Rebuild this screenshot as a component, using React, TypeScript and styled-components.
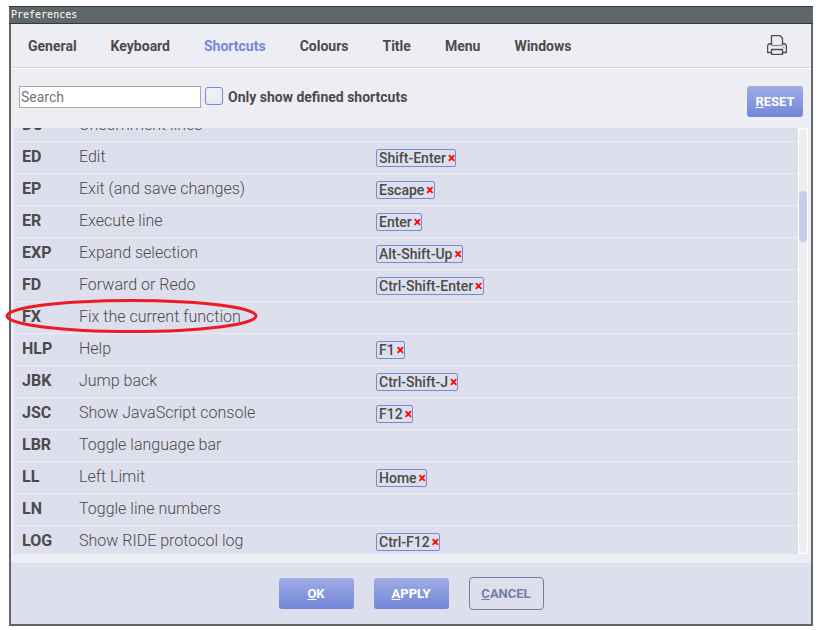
import React, { useLayoutEffect, useRef, useState } from "react";
import styled, { createGlobalStyle, css } from "styled-components";

const GlobalStyle = createGlobalStyle`
  * { box-sizing: border-box; }
  html, body, #root { height: 100%; }
  body {
    margin: 0;
    background: #fff;
    color: #4c4a4b;
    font: 400 14px/20px Roboto, "Liberation Sans", sans-serif;
  }
  button, input { font: inherit; color: inherit; }
`;

const Page = styled.div`
  position: relative;
  height: 100%;
  padding: 6px 13px 4px 9px;
`;

const Dialog = styled.main`
  height: 100%;
  display: flex;
  flex-direction: column;
  background: #edeef4;
  border: 2px solid #5f676a;
  border-top: 0;
`;

const TitleBar = styled.header`
  height: 18px;
  flex: none;
  margin: 0 -2px;
  padding-left: 2px;
  background: #5f676a;
  border-top: 1px solid #333a3c;
  border-bottom: 1px solid #333a3c;
  color: #fff;
  font: 10px/15px "DejaVu Sans Mono", monospace;
`;

const TabBar = styled.nav`
  height: 45px;
  flex: none;
  display: flex;
  align-items: center;
  padding-right: 24px;
  border-bottom: 1px solid #fff;
  box-shadow: inset 0 -1px #d3d4d6;
`;

const Tab = styled.button<{ $active: boolean }>`
  height: 44px;
  padding: 0 17px;
  border: 0;
  background: none;
  font-weight: 700;
  color: ${(p) => (p.$active ? "#7688d9" : "#4c4a4b")};
`;

const PrintButton = styled.button`
  display: flex;
  margin: 0 0 2px auto;
  padding: 0;
  border: 0;
  background: none;
`;

const Toolbar = styled.div`
  height: 59px;
  flex: none;
  display: flex;
  align-items: flex-start;
  padding: 17px 8px 0;
`;

const SearchBox = styled.input`
  width: 182px;
  height: 22px;
  padding: 0 1px;
  border: 1px solid #a9a9a9;
  background: #fff;
  &::placeholder { color: #757575; opacity: 1; }
`;

const CheckLabel = styled.label`
  display: flex;
  align-items: center;
  gap: 5px;
  height: 22px;
  margin-left: 4px;
  font-weight: 700;
`;

const CheckBox = styled.input`
  appearance: none;
  width: 18px;
  height: 18px;
  margin: 0 0 2px;
  border: 1px solid #7688d9;
  border-radius: 3px;
  background: linear-gradient(#f0f1f6, #e9e9ee);
  &:checked { background: #7688d9; }
`;

const Button = styled.button<{ $variant?: "outline" | "solid"; $wide?: boolean }>`
  height: 31px;
  width: ${(p) => (p.$wide ? "75px" : "56px")};
  padding: 0;
  border: 0;
  border-radius: 3px;
  background: linear-gradient(#a0ace5, #7286d8);
  color: #fff;
  font-size: 13px;
  font-weight: 700;
  ${(p) =>
    p.$variant === "outline" &&
    css`
      height: 33px;
      border: 1px solid #747da4;
      border-radius: 4px;
      background: none;
      color: #747da4;
    `}
`;

const ResetSlot = styled.div`
  display: flex;
  margin-left: auto;
`;

const ListArea = styled.section`
  flex: 1;
  min-height: 0;
  display: flex;
  margin: 0 3px 9px;
`;

const ScrollPane = styled.div`
  flex: 1;
  overflow: hidden;
  background: #dddfec;
`;

const Table = styled.table`
  width: 100%;
  table-layout: fixed;
  border-collapse: collapse;
  font-size: 16px;
`;

const Row = styled.tr`
  height: 32px;
  border-bottom: 1px solid #edeef4;
`;

const CodeCell = styled.th`
  width: 57px;
  padding: 0 0 0 8px;
  text-align: left;
  font-weight: 700;
`;

const NameCell = styled.td`
  width: 297px;
  padding: 0 0 0 8px;
  font-weight: 300;
`;

const KeyCell = styled.td`
  padding: 2px 0 0 8px;
`;

const KeyTag = styled.span`
  display: flex;
  align-items: center;
  width: max-content;
  height: 18px;
  padding-left: 2px;
  border: 1px solid #7688d9;
  border-radius: 2px;
  font-size: 14px;
  font-weight: 500;
`;

const RemoveKey = styled.button`
  display: flex;
  padding: 0 0 0 2px;
  border: 0;
  background: none;
  color: #f00;
  line-height: 16px;
  font-weight: 700;
`;

const ScrollTrack = styled.div`
  width: 10px;
  flex: none;
  display: flex;
  padding: 1px;
  background: #fff;
`;

const ScrollGroove = styled.div`
  flex: 1;
  padding-top: 62px;
  border-radius: 4px;
  background: #efefef;
`;

const ScrollThumb = styled.div`
  height: 51px;
  border-radius: 4px;
  background: #c8cee8;
`;

const Footer = styled.footer`
  height: 61px;
  flex: none;
  display: flex;
  justify-content: center;
  align-items: center;
  gap: 20px;
  background: #dddfec;
`;

const Mark = styled.svg`
  position: absolute;
  left: 4px;
  top: 298px;
  pointer-events: none;
`;

const tabs = ["General", "Keyboard", "Shortcuts", "Colours", "Title", "Menu", "Windows"];

const shortcuts: [string, string, string?][] = [
  ["DC", "Uncomment lines"],
  ["ED", "Edit", "Shift-Enter"],
  ["EP", "Exit (and save changes)", "Escape"],
  ["ER", "Execute line", "Enter"],
  ["EXP", "Expand selection", "Alt-Shift-Up"],
  ["FD", "Forward or Redo", "Ctrl-Shift-Enter"],
  ["FX", "Fix the current function"],
  ["HLP", "Help", "F1"],
  ["JBK", "Jump back", "Ctrl-Shift-J"],
  ["JSC", "Show JavaScript console", "F12"],
  ["LBR", "Toggle language bar"],
  ["LL", "Left Limit", "Home"],
  ["LN", "Toggle line numbers"],
  ["LOG", "Show RIDE protocol log", "Ctrl-F12"],
];

const PrinterIcon = () => (
  <svg width="20" height="20" viewBox="0 0 20 20" fill="none" stroke="#4c4a4b" strokeWidth="1.3" strokeLinejoin="round">
    <path d="M4.5 10.5V.6h8.600l2.400 2.900v7" />
    <path d="M4.500 8.500C2 8.500.6 9.600.6 11.500v6h3.900M15.500 8.500c2.500 0 3.900 1.100 3.900 3v6h-3.900" />
    <path d="M4.500 10.500h11" stroke="#8b8a90" />
    <path d="M4.500 14.500h11v4.900h-11z" />
    <path d="M16 12.500h1.500" stroke="#8e8e92" />
  </svg>
);

export default function App() {
  const [active, setActive] = useState("Shortcuts");
  const pane = useRef<HTMLDivElement>(null);

  useLayoutEffect(() => {
    if (pane.current) pane.current.scrollTop = 19;
  }, []);

  return (
    <Page>
      <GlobalStyle />
      <Dialog>
        <TitleBar>Preferences</TitleBar>
        <TabBar>
          {tabs.map((name) => (
            <Tab key={name} type="button" $active={name === active} onClick={() => setActive(name)}>
              {name}
            </Tab>
          ))}
          <PrintButton type="button" aria-label="Print">
            <PrinterIcon />
          </PrintButton>
        </TabBar>
        <Toolbar>
          <SearchBox type="text" placeholder="Search" aria-label="Search" />
          <CheckLabel>
            <CheckBox type="checkbox" />
            Only show defined shortcuts
          </CheckLabel>
          <ResetSlot>
            <Button type="button"><u>R</u>ESET</Button>
          </ResetSlot>
        </Toolbar>
        <ListArea>
          <ScrollPane ref={pane}>
            <Table>
              <tbody>
                {shortcuts.map(([code, name, keys]) => (
                  <Row key={code}>
                    <CodeCell scope="row">{code}</CodeCell>
                    <NameCell>{name}</NameCell>
                    <KeyCell>
                      {keys && (
                        <KeyTag>
                          {keys}
                          <RemoveKey type="button" aria-label={`Remove ${keys}`}>×</RemoveKey>
                        </KeyTag>
                      )}
                    </KeyCell>
                  </Row>
                ))}
              </tbody>
            </Table>
          </ScrollPane>
          <ScrollTrack>
            <ScrollGroove>
              <ScrollThumb />
            </ScrollGroove>
          </ScrollTrack>
        </ListArea>
        <Footer>
          <Button type="button" $wide><u>O</u>K</Button>
          <Button type="button" $wide><u>A</u>PPLY</Button>
          <Button type="button" $wide $variant="outline"><u>C</u>ANCEL</Button>
        </Footer>
      </Dialog>
      <Mark width="256" height="38" fill="none" stroke="#ed1c24" strokeWidth="3" aria-hidden="true">
        <ellipse cx="127.500" cy="18" rx="124.500" ry="15.500" />
      </Mark>
    </Page>
  );
}
